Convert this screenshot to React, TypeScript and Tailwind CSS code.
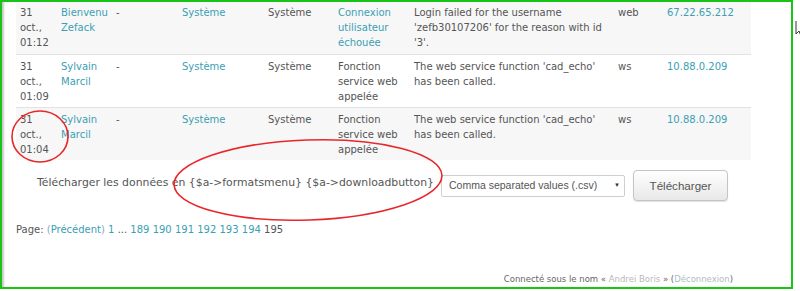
import React from "react";

const link = "text-[#3aa0b4]";

type Row = {
  date: string[];
  user: string[];
  event: string[];
  eventLink: boolean;
  desc: string[];
  origin: string;
  ip: string;
  bg: string;
};

const rows: Row[] = [
  {
    date: ["31", "oct.,", "01:12"],
    user: ["Bienvenu", "Zefack"],
    event: ["Connexion", "utilisateur", "échouée"],
    eventLink: true,
    desc: ["Login failed for the username", "'zefb30107206' for the reason with id", "'3'."],
    origin: "web",
    ip: "67.22.65.212",
    bg: "bg-[#f7f7f7] pt-[3px] pb-[4px]",
  },
  {
    date: ["31", "oct.,", "01:09"],
    user: ["Sylvain", "Marcil"],
    event: ["Fonction", "service web", "appelée"],
    eventLink: false,
    desc: ["The web service function 'cad_echo'", "has been called."],
    origin: "ws",
    ip: "10.88.0.209",
    bg: "bg-white pt-1 pb-[3px] border-t border-[#e2e2e2]",
  },
  {
    date: ["31", "oct.,", "01:04"],
    user: ["Sylvain", "Marcil"],
    event: ["Fonction", "service web", "appelée"],
    eventLink: false,
    desc: ["The web service function 'cad_echo'", "has been called."],
    origin: "ws",
    ip: "10.88.0.209",
    bg: "bg-[#f7f7f7] pt-1 pb-[3px] border-t border-[#e2e2e2]",
  },
];

function Lines({ items }: { items: string[] }) {
  return (
    <>
      {items.map((t, i) => (
        <div key={i} className="whitespace-nowrap">
          {t}
        </div>
      ))}
    </>
  );
}

export default function App() {
  return (
    <div className="relative h-[291px] w-[800px] overflow-hidden bg-white font-['DejaVu_Sans',Verdana,sans-serif] text-[10px] leading-[15px] text-[#555]">
      <div className="h-[289px] w-[793px] border-[2.5px] border-[#17c417] shadow-[inset_3px_0_2px_-1px_#c8c8c8]">
        {/* log table */}
        <div className="ml-[14px] w-[735px]">
          {rows.map((r, i) => (
            <div
              key={i}
              className={`grid grid-cols-[41px_55px_66px_86px_70px_76px_204px_49px_88px] ${r.bg}`}
            >
              <div className="pl-1">
                <Lines items={r.date} />
              </div>
              <div className={`pl-1 ${link}`}>
                <Lines items={r.user} />
              </div>
              <div className="pl-1">-</div>
              <div className={`pl-1 ${link}`}>Système</div>
              <div className="pl-1">Système</div>
              <div className={`pl-1 ${r.eventLink ? link : ""}`}>
                <Lines items={r.event} />
              </div>
              <div className="pl-1">
                <Lines items={r.desc} />
              </div>
              <div className="pl-1">{r.origin}</div>
              <div className={`pl-1 ${link}`}>{r.ip}</div>
            </div>
          ))}
        </div>

        {/* download */}
        <div className="mt-[10px] flex items-center pl-[35px]">
          <span className="mb-[6px] whitespace-nowrap text-[10.85px]">
            Télécharger les données en {"{$a->formatsmenu}"} {"{$a->downloadbutton}"}
          </span>
          <div className="ml-[7px] flex h-[22px] w-[184px] items-center justify-between rounded-[2px] border border-[#cfcfcf] bg-white pl-[7px] pr-[4px] font-['Liberation_Sans',Arial,sans-serif] text-[10.5px] text-[#555]">
            <span>Comma separated values (.csv)</span>
            <span className="text-[6px] text-[#333]">▼</span>
          </div>
          <div className="ml-[8px] flex h-[31px] w-[95px] items-center justify-center rounded-[4px] border border-[#c4c4c4] bg-gradient-to-b from-white to-[#e8e8e8] font-['Liberation_Sans',Arial,sans-serif] text-[11.6px] text-[#555] shadow-[0_1px_1px_rgba(0,0,0,0.12)]">
            Télécharger
          </div>
        </div>

        {/* pagination */}
        <div className="mt-[21px] pl-[14px] whitespace-nowrap">
          Page: <span className="text-[#8aa9b4]">(</span>
          <span className={link}>Précédent</span>
          <span className="text-[#8aa9b4]">)</span> <span className={link}>1</span> ...{" "}
          <span className={link}>189</span> <span className={link}>190</span>{" "}
          <span className={link}>191</span> <span className={link}>192</span>{" "}
          <span className={link}>193</span> <span className={link}>194</span> 195
        </div>

        {/* footer */}
        <div className="mt-[36px] flex justify-end pr-[58px] text-[8.5px] leading-[12px] text-[#666]">
          <span className="whitespace-nowrap">
            Connecté sous le nom « <span className="text-[#b8b8b8]">Andrei Boris</span> » (
            <span className="text-[#b0bcc4]">Déconnexion</span>)
          </span>
        </div>
      </div>

      {/* red annotation ellipses and cursor */}
      <svg className="pointer-events-none absolute left-0 top-0" width="800" height="291">
        <ellipse cx="40" cy="136.5" rx="28" ry="25.5" fill="none" stroke="#e8272b" strokeWidth="1.6" />
        <ellipse
          cx="308"
          cy="180"
          rx="134"
          ry="40"
          fill="none"
          stroke="#e8272b"
          strokeWidth="1.6"
          transform="rotate(-2 308 180)"
        />
        <path d="M796 21 L796 34 L799 31 L801 36" fill="white" stroke="#333" strokeWidth="1" />
      </svg>
    </div>
  );
}
